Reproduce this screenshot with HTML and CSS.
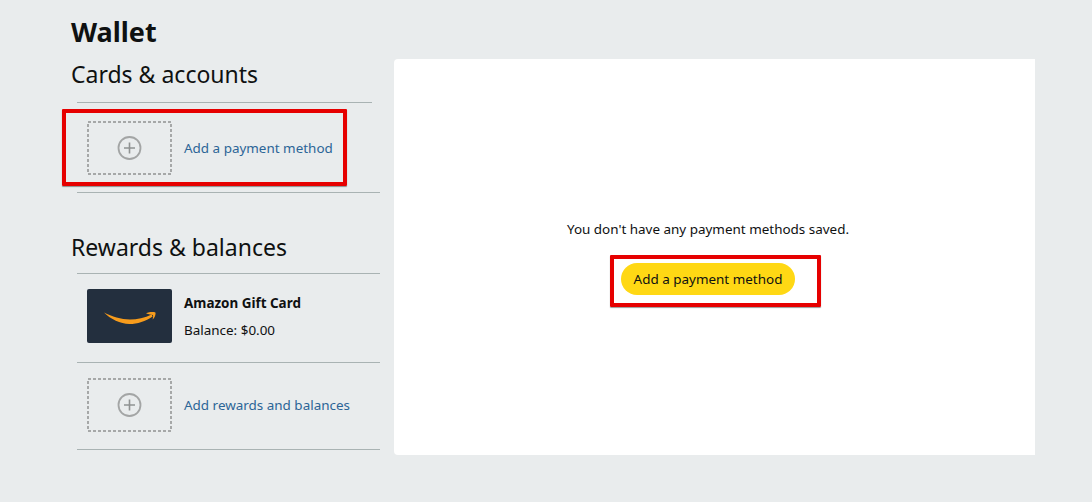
FILE: index.html
```html
<!DOCTYPE html>
<html lang="en">
<head>
    <meta charset="UTF-8">
    <meta name="viewport" content="width=device-width, initial-scale=1.0">
    <title>Wallet</title>
    <link rel="stylesheet" href="styles.css">
</head>
<body>
    <div class="wallet">
        <div class="sidebar">
            <h1>Wallet</h1>
            <h2>Cards &amp; accounts</h2>
            <ul class="list list-cards">
                <li class="row row-first">
                    <svg class="add-box" width="85" height="54" viewBox="0 0 85 54"><rect x="1" y="1" width="83" height="52" fill="none" stroke="#a6a8a8" stroke-width="2" stroke-dasharray="3 2"/><circle cx="42.5" cy="27" r="11" fill="none" stroke="#a3a5a5" stroke-width="1.8"/><path d="M42.5 21.5v11M37 27h11" stroke="#8f9292" stroke-width="1.6"/></svg>
                    <a class="link" href="#">Add a payment method</a>
                    <span class="mark mark-row"></span>
                </li>
            </ul>
            <h2 class="second">Rewards &amp; balances</h2>
            <ul class="list list-rewards">
                <li class="row row-gift">
                    <div class="gift">
                        <svg width="52" height="12" viewBox="0 0 52 12"><path d="M0 .6C8 4.4 17 7.6 26 7.6C33 7.6 41 5.8 47.6 2.6L48.6 4.4C41.5 9 33.5 12 25.5 12C16 12 7 7.4 0 .6Z" fill="#f79c1c"/><path d="M42 1.4C44.8 0 49 -.2 51.4 .4C52 2.4 50.8 5.6 48.6 7.6C49 5.6 49.4 3.8 48.8 3C47.4 2.4 44.8 2.2 42 1.4Z" fill="#f79c1c"/></svg>
                    </div>
                    <div class="gift-text">
                        <strong>Amazon Gift Card</strong>
                        <span>Balance: $0.00</span>
                    </div>
                </li>
                <li class="row">
                    <svg class="add-box" width="85" height="54" viewBox="0 0 85 54"><rect x="1" y="1" width="83" height="52" fill="none" stroke="#a6a8a8" stroke-width="2" stroke-dasharray="3 2"/><circle cx="42.5" cy="27" r="11" fill="none" stroke="#a3a5a5" stroke-width="1.8"/><path d="M42.5 21.5v11M37 27h11" stroke="#8f9292" stroke-width="1.6"/></svg>
                    <a class="link" href="#">Add rewards and balances</a>
                </li>
            </ul>
        </div>
        <div class="panel">
            <p>You don't have any payment methods saved.</p>
            <div class="btn-wrap">
                <button>Add a payment method</button>
                <span class="mark mark-btn"></span>
            </div>
        </div>
    </div>
</body>
</html>
```

FILE: styles.css
```css
* {
    box-sizing: border-box;
}

body {
    margin: 0;
    height: 502px;
    overflow: hidden;
    background: #e9eced;
    font-family: "Noto Sans", sans-serif;
    color: #0f1111;
}

.wallet {
    display: flex;
    padding-left: 71px;
}

.sidebar {
    width: 323px;
    padding-top: 14px;
}

h1 {
    margin: 0;
    font-size: 27px;
    line-height: 36px;
    font-weight: 700;
}

h2 {
    margin: 6px 0 0;
    font-size: 23px;
    line-height: 36px;
    font-weight: 400;
}

h2.second {
    margin-top: 36px;
}

.list {
    list-style: none;
    margin: 0 14px 0 6px;
    padding: 0;
}

/* top rule is shorter than the one under the row */
.list-cards {
    margin-top: 10px;
}

.list-cards::before {
    content: "";
    display: block;
    width: 295px;
    height: 1px;
    background: #a9b3b3;
}

.list-rewards {
    margin-top: 8px;
    border-top: 1px solid #a9b3b3;
}

.row {
    position: relative;
    display: flex;
    align-items: center;
    gap: 12px;
    padding: 15px 0 17px 10px;
    border-bottom: 1px solid #a9b3b3;
}

.row-first {
    padding-top: 18px;
}

.row-gift {
    padding-bottom: 19px;
}

.add-box {
    display: block;
    flex: none;
}

.link {
    font-size: 13.45px;
    color: #2c6597;
    text-decoration: none;
}

.gift {
    display: flex;
    align-items: center;
    justify-content: center;
    width: 85px;
    height: 54px;
    padding-top: 4px;
    background: #232f3e;
    border-radius: 2px;
}

.gift-text {
    display: flex;
    flex-direction: column;
    gap: 9px;
    font-size: 13.45px;
    line-height: 18px;
}

.mark {
    position: absolute;
    border: 4px solid #e60000;
    box-shadow: 0 1px 1px rgba(0, 0, 0, 0.4);
    border-radius: 1px;
}

.mark-row {
    left: -15px;
    top: 6px;
    width: 285px;
    height: 77px;
}

.panel {
    display: flex;
    flex-direction: column;
    align-items: center;
    width: 641px;
    height: 396px;
    margin-top: 59px;
    padding: 160px 13px 0 0;
    background: #fff;
    border-radius: 4px 0 0 4px;
}

.panel p {
    margin: 0;
    font-size: 13.45px;
    line-height: 20px;
}

.btn-wrap {
    position: relative;
    margin-top: 24px;
}

.btn-wrap button {
    display: block;
    width: 174px;
    height: 32px;
    padding: 0;
    border: none;
    border-radius: 16px;
    background: #ffd814;
    font-family: inherit;
    font-size: 13.45px;
    color: #0f1111;
}

.mark-btn {
    left: -11px;
    top: -8px;
    width: 211px;
    height: 52px;
}
```
